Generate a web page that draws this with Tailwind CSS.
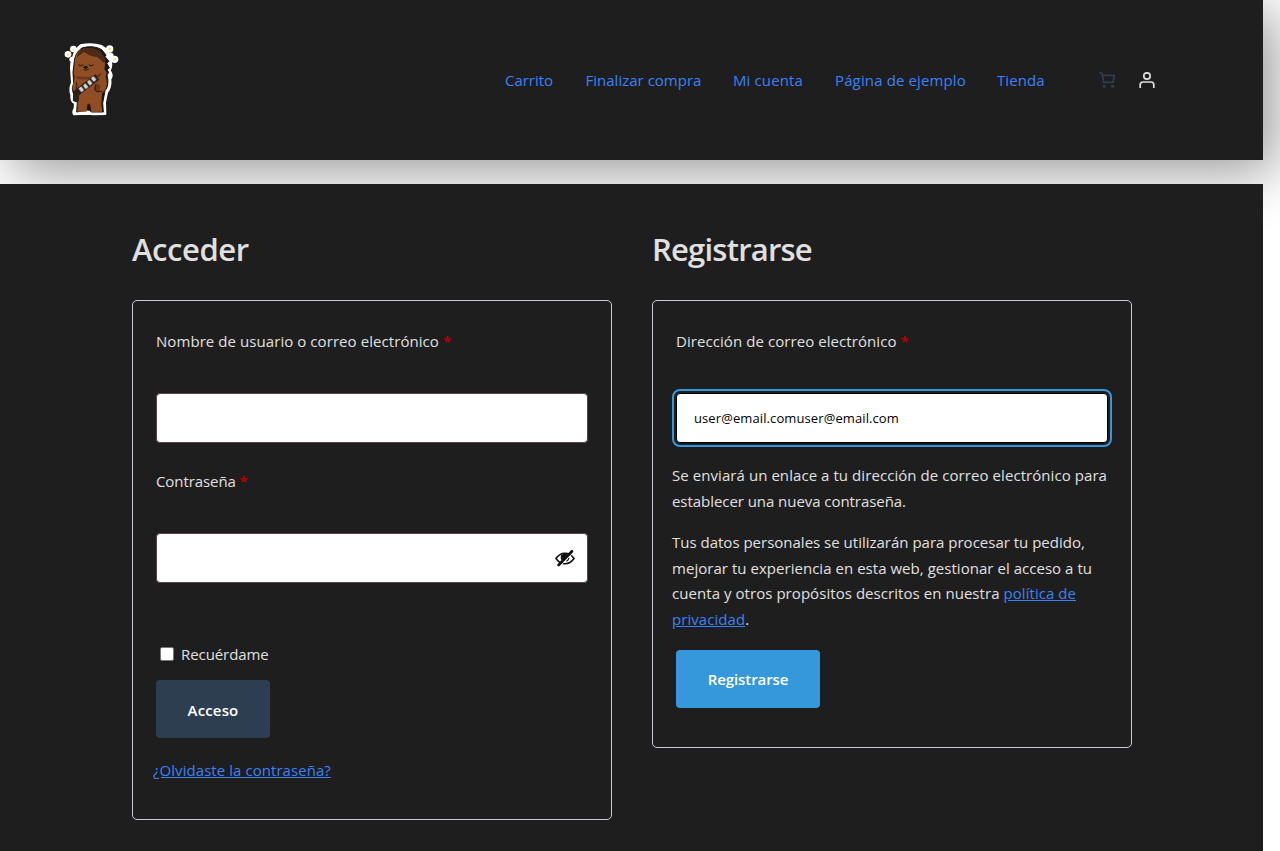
<!DOCTYPE html>
<html lang="es">
<head>
<meta charset="utf-8">
<title>Mi cuenta</title>
<script src="https://cdn.jsdelivr.net/npm/@tailwindcss/browser@4"></script>
</head>
<body class="h-[851px] overflow-hidden bg-white font-['Open_Sans',sans-serif] text-[15px] leading-[25.6px] text-[#e0e0e0]">
<header class="flex h-40 w-[1263px] items-center bg-[#1e1e1e] pl-16 shadow-[12px_12px_50px_rgba(0,0,0,0.4)]">
  <a href="#" aria-label="Inicio">
    <svg class="block h-20 w-14" viewBox="42 15 168 240">
      <g fill="#fff">
        <circle cx="54" cy="58" r="10"/><circle cx="70" cy="42" r="10"/><circle cx="66" cy="73" r="8"/>
        <circle cx="179" cy="42" r="11"/><circle cx="194" cy="73" r="11"/><circle cx="182" cy="62" r="9"/>
        <path stroke="#fff" stroke-width="6" stroke-linejoin="round" d="M92 31Q123 23 155 33Q176 45 180 67Q188 90 179 107Q190 120 181 133Q184 155 171 173L165 202L166 237L128 238L115 236L72 238Q67 232 74 220L75 204Q62 200 64 180Q57 159 66 144L64 113Q60 87 70 65Q75 43 92 31Z"/>
      </g>
      <g fill="#e9ed70"><circle cx="54" cy="59" r="3.500"/><circle cx="71" cy="44" r="3.500"/><circle cx="179" cy="42" r="4"/><circle cx="194" cy="73" r="4"/></g>
      <path fill="#171310" stroke="#171310" stroke-width="3" stroke-linejoin="round" d="M98 38Q132 30 155 44L168 60L165 65L177 79L170 84L178 99L171 104L176 112L171 120Q179 150 165 167L158 204L160 231L124 231L117 224L80 231L82 201L70 197L71 179Q63 160 71 145L69 112L74 71Q80 48 98 38Z"/>
      <path fill="#914d23" stroke="#914d23" stroke-width="4" stroke-linejoin="round" d="M97 44Q126 38 146 51Q158 62 158 78L164 84L161 103L168 113L165 125Q173 147 164 163L154 176L152 210L155 228L126 229L122 206L111 206L108 228L84 228L87 178L71 166Q67 153 73 142L76 124L73 116L77 73Q82 51 97 44Z"/>
      <path fill="#4b2a18" d="M99 41Q130 34 152 49L168 75L161 83L142 66Q120 64 103 51L81 66Q84 48 99 41Z"/>
      <path fill="#6d3819" d="M80 124Q120 132 155 113L150 125Q119 137 81 132ZM137 145L151 151L148 170L132 165Z"/>
      <path fill="none" stroke="#221711" stroke-width="3" stroke-linecap="round" d="M86 90Q92 96 99 90M117 90Q123 96 130 90M102 104Q108 108 115 103M79 143Q83 153 79 162M137 150Q130 166 141 170L156 170M117 207L116 226"/>
      <ellipse cx="107" cy="97" rx="6" ry="4" fill="#17110f"/>
      <path fill="none" stroke="#241e1c" stroke-width="20" d="M78 175L142 126"/>
      <g fill="#d4d0cb" stroke="#4b443f" stroke-width="2.500">
        <rect x="-6" y="-8" width="12" height="16" rx="4" transform="translate(94 163) rotate(-38)"/>
        <rect x="-6" y="-8" width="12" height="16" rx="4" transform="translate(107 154) rotate(-38)"/>
        <rect x="-6" y="-8" width="12" height="16" rx="4" transform="translate(119 143) rotate(-38)"/>
        <rect x="-6" y="-8" width="12" height="16" rx="4" transform="translate(131 132) rotate(-38)"/>
      </g>
      <path fill="#30211b" d="M69 173H87V198H69Z"/>
    </svg>
  </a>
  <nav class="ml-[385px] flex pt-[2px] text-[#3b82f6]">
    <a class="w-[80.5px] tracking-[-0.03px]" href="#">Carrito</a>
    <a class="w-[147.5px] tracking-[0.01px]" href="#">Finalizar compra</a>
    <a class="w-[102px] tracking-[0.12px]" href="#">Mi cuenta</a>
    <a class="w-[162px] tracking-[0.13px]" href="#">Página de ejemplo</a>
    <a class="w-[102px] tracking-[0.1px]" href="#">Tienda</a>
  </nav>
  <div class="flex gap-6">
    <svg class="h-4 w-4 text-[#2c3e50]" viewBox="0 0 16 16" fill="none" stroke="currentColor" stroke-width="1.7"><path d="M0 1H2.900L4.800 10.400H14L15.300 3.300H3.400"/><circle cx="5.200" cy="14.300" r="1.600" fill="currentColor" stroke="none"/><circle cx="13.500" cy="14.300" r="1.600" fill="currentColor" stroke="none"/></svg>
    <svg class="h-4 w-4 text-[#e0e0e0]" viewBox="0 0 16 16" fill="none" stroke="currentColor" stroke-width="1.700"><circle cx="8" cy="4" r="3.200"/><path d="M1.200 16.500V12.800Q1.200 10 4 10H12Q14.800 10 14.800 12.800V16.500"/></svg>
  </div>
</header>
<main class="mt-6 flex h-[667px] w-[1263px] gap-10 bg-[#1e1e1e] pt-11 pl-[132px]">
  <section class="w-[480px]">
    <h2 class="h-[72px] text-[31px] leading-[42px] font-semibold tracking-[-0.42px]">Acceder</h2>
    <form class="h-[520px] rounded-[5px] border border-[#cfc8d8] px-[23px] pt-7">
      <label class="block h-16 tracking-[0.07px]" for="user">Nombre de usuario o correo electrónico <b class="text-[#b30000]">*</b></label>
      <input id="user" class="block h-[50px] w-full rounded-[4px] border border-[#5b4146] bg-white">
      <label class="mt-[26px] block h-16 tracking-[-0.08px]" for="pass">Contraseña <b class="text-[#b30000]">*</b></label>
      <div class="flex h-[50px] items-center justify-end rounded-[4px] border border-[#5b4146] bg-white pr-[11px]">
        <svg class="h-5 w-[22px]" viewBox="0 0 22 20" fill="none" stroke="#111"><path stroke-width="1.600" d="M2 10.500Q5.500 5.200 11 5.200Q16.500 5.200 20 10.500Q16.500 15.700 11 15.700Q5.500 15.700 2 10.500Z"/><path fill="#111" stroke="none" d="M7 7Q6 11 8.500 13.500L14 7Q11 4.500 7 7Z"/><path stroke-width="1.200" d="M12.300 13.200Q14.800 12.200 14.800 9.500"/><path stroke="#fff" stroke-width="1" d="M5.500 18.600L20.200 4"/><path stroke-width="2.700" stroke-linecap="round" d="M4.600 17L18 3.200"/></svg>
      </div>
      <label class="mt-[58px] ml-1 flex h-[26px] items-center gap-[7px] tracking-[-0.08px]"><input type="checkbox" class="h-[14px] w-[14px] appearance-none rounded-[2px] border border-[#767676] bg-white"><span class="pt-[2px]">Recuérdame</span></label>
      <button type="button" class="mt-[13px] block h-[58px] w-[114px] rounded-[4px] bg-[#2c3e50] pt-[3px] font-semibold tracking-[0.15px] text-white">Acceso</button>
      <a class="mt-5 ml-[-3px] block w-fit tracking-[0.06px] text-[#3b82f6] underline" href="#">¿Olvidaste la contraseña?</a>
    </form>
  </section>
  <section class="w-[480px]">
    <h2 class="h-[72px] text-[31px] leading-[42px] font-semibold tracking-[-0.78px]">Registrarse</h2>
    <form class="h-[448px] rounded-[5px] border border-[#cfc8d8] px-[23px] pt-7">
      <label class="block h-16 tracking-[0.07px]" for="mail">Dirección de correo electrónico <b class="text-[#b30000]">*</b></label>
      <input id="mail" value="user@email.comuser@email.com" class="block h-[50px] w-full rounded-[4px] border border-black bg-white px-[17px] text-[13px] tracking-[0.1px] text-black outline-2 outline-offset-2 outline-[#3498db]">
      <p class="mt-5 -ml-1 whitespace-nowrap"><span class="tracking-[0.067px]">Se enviará un enlace a tu dirección de correo electrónico para</span><br><span class="tracking-[-0.054px]">establecer una nueva contraseña.</span></p>
      <p class="mt-4 -ml-1 whitespace-nowrap"><span>Tus datos personales se utilizarán para procesar tu pedido,</span><br><span class="tracking-[0.036px]">mejorar tu experiencia en esta web, gestionar el acceso a tu</span><br><span class="tracking-[0.055px]">cuenta y otros propósitos descritos en nuestra <a class="text-[#3b82f6] underline" href="#">política de<br>privacidad</a>.</span></p>
      <button type="button" class="mt-[17px] block h-[58px] w-36 rounded-[4px] bg-[#3498db] pt-[3px] font-semibold tracking-[-0.08px] text-white">Registrarse</button>
    </form>
  </section>
</main>
</body>
</html>
